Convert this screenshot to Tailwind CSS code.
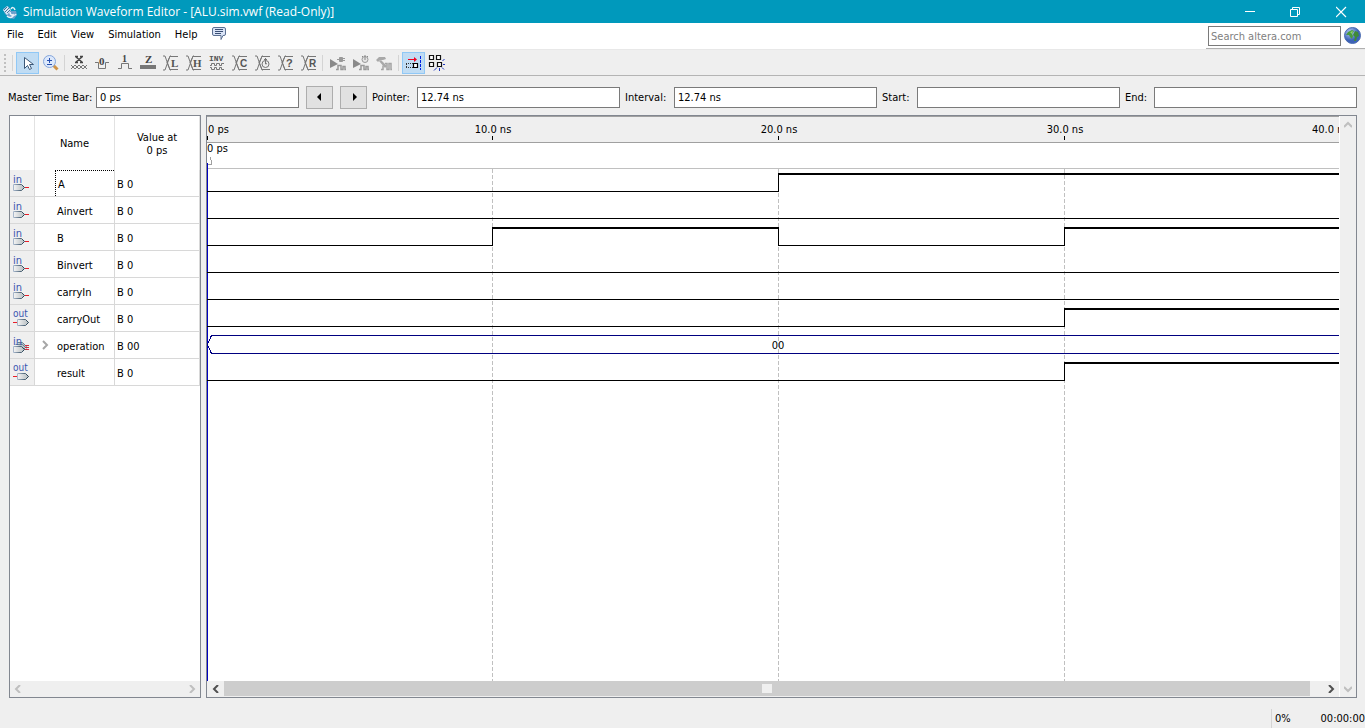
<!DOCTYPE html>
<html lang="en">
<head>
<meta charset="utf-8">
<title>Simulation Waveform Editor</title>
<script src="https://cdn.jsdelivr.net/npm/@tailwindcss/browser@4"></script>
</head>
<body class="flex h-screen flex-col overflow-hidden bg-[#efefef] font-['DejaVu_Sans_Condensed','DejaVu_Sans',sans-serif] text-[11px] leading-[13px] text-black">

<svg class="absolute h-0 w-0" aria-hidden="true">
  <defs>
    <linearGradient id="gate" x1="0" x2="1"><stop offset="0" stop-color="#f4f4f4"/><stop offset="1" stop-color="#b4bcc0"/></linearGradient>
    <linearGradient id="edge" x1="0" x2="1"><stop offset="0" stop-color="#a9b8cc"/><stop offset="1" stop-color="#1f3a4c"/></linearGradient>
    <radialGradient id="sea" cx=".35" cy=".3"><stop offset="0" stop-color="#b9cdf5"/><stop offset="1" stop-color="#3c62b8"/></radialGradient>
    <symbol id="pin-in" viewBox="0 0 18 18">
      <text x="0" y="9" font-size="11" fill="#3a55b0">in</text>
      <path d="M.5 10.500h8l3 3-3 3h-8z" fill="url(#gate)" stroke="url(#edge)"/>
      <path d="M12 13.500h4" stroke="#e8202a"/>
    </symbol>
    <symbol id="pin-out" viewBox="0 0 18 18">
      <text x="0" y="8" font-size="10" fill="#3a55b0">out</text>
      <path d="M0 13.500h4" stroke="#e8202a"/>
      <path d="M4.500 10.500h8l3 3-3 3h-8z" fill="url(#gate)" stroke="url(#edge)"/>
    </symbol>
    <symbol id="pin-bus" viewBox="0 0 18 18">
      <path d="M4.500 6.500h5l4 4-3 3M2.500 8.500h7l4 4" fill="#b8c2c8" stroke="#6c8294"/>
      <text x="0" y="9" font-size="11" fill="#3a55b0">in</text>
      <path d="M.5 10.500h8l3 3-3 3h-8z" fill="url(#gate)" stroke="url(#edge)"/>
      <path d="M12 9.500h4M12 11.500h4M12 13.500h4" stroke="#d03040"/>
    </symbol>
    <symbol id="cross" viewBox="0 0 16 16"><path d="M0 1h2l5 14h1M0 15h2l5-14h1M7 1.500h8M7 14.500h8M7 1.500l-3 6 3 7" fill="none" stroke="#777"/></symbol>
  </defs>
</svg>

<header class="flex h-[23px] shrink-0 items-center bg-[#0099bc] pl-[2px] text-white">
  <svg class="h-4 w-4 shrink-0" viewBox="0 0 16 16">
    <path d="M1 5l5-3 3 5 5 0 1 4-3 4-4-1-5-4z" fill="#6ba0cc"/>
    <path d="M1 6l4-4 4 4-4 5z" fill="#d5e8f5"/><path d="M3 8l4-4M2 6l3-3M5 9l3-3" stroke="#48759c"/>
    <path d="M9 5c1-2 3-2 4 1M5 12c3 3 7 1 6-2M8 8c0 4 5 4 6 2" fill="none" stroke="#e8f1f8" stroke-width="1.500"/>
  </svg>
  <h1 class="ml-[5px] flex-1 whitespace-nowrap font-['Open_Sans','Noto_Sans',sans-serif] text-[12px] leading-4">Simulation Waveform Editor - [ALU.sim.vwf (Read-Only)]</h1>
  <button aria-label="Minimize" class="flex h-full w-[46px] items-center justify-center"><svg class="h-3 w-3" viewBox="0 0 12 12"><path d="M1 5.500h10" stroke="#fff"/></svg></button>
  <button aria-label="Restore" class="flex h-full w-[46px] items-center justify-center"><svg class="h-3 w-3" viewBox="0 0 12 12" fill="none" stroke="#fff"><path d="M.5 3.500h7v7h-7zM2.500 3V1.500h7v7H8"/></svg></button>
  <button aria-label="Close" class="flex h-full w-[46px] items-center justify-center"><svg class="h-3 w-3" viewBox="0 0 12 12"><path d="M0 1l10 10M10 1L0 11" stroke="#fff" stroke-width="1.200"/></svg></button>
</header>

<div class="flex h-[27px] shrink-0 items-start border-b border-[#e8e8e8] bg-white">
  <nav class="flex h-[22px] flex-1 items-center gap-[14px] pl-[7px]">
    <button>File</button><button>Edit</button><button>View</button><button>Simulation</button><button>Help</button>
    <button aria-label="Feedback"><svg class="h-4 w-4" viewBox="0 0 16 16"><path d="M3 1.500h10q1.500 0 1.500 1.500v5q0 1.500-1.500 1.500h-1l-2 4v-4H3Q1.500 9.500 1.500 8V3q0-1.500 1.500-1.500z" fill="#d9e3f6" stroke="#5c7092"/><path d="M4 3.500h8M4 5.500h8M4 7.500h6" stroke="#3a4e74"/></svg></button>
  </nav>
  <div class="flex h-[26px] w-[159px] items-center gap-[3px] border-b border-[#b0b0b0] pl-[2px]">
    <input type="text" aria-label="Search altera.com" placeholder="Search altera.com" class="h-5 w-[133px] border border-[#7a7a7a] bg-white px-[2px] pt-[2px] placeholder:text-[#808080]">
    <button aria-label="Web search"><svg class="h-[17px] w-[17px]" viewBox="0 0 17 17"><circle cx="8.500" cy="8.500" r="8" fill="url(#sea)" stroke="#4c6cb0"/><path d="M2 8l2-3 4-2 2 1-2 3 1 2-1 3-2-2-1-2z" fill="#4a9a3c"/><path d="M11 4l3 1 1 4-2 1-1 4-2 0 1-4-2-2z" fill="#3f8a38"/><path d="M6 5l3-1-1 3z" fill="#8fd06a"/></svg></button>
  </div>
</div>

<div role="toolbar" class="flex h-[26px] shrink-0 items-center border-b border-[#b4b4b4] [&_svg]:overflow-visible">
  <svg class="ml-[4px] h-5 w-[7px] shrink-0" viewBox="0 0 7 20"><path d="M1 1v19" stroke="#c0c0c0" stroke-width="2" stroke-dasharray="2 2"/></svg>
  <div class="mr-[3px] ml-px h-4 w-px bg-[#d4d4d4]"></div>
  <button aria-label="Selection tool" class="flex h-[22px] w-[23px] items-center justify-center border border-[#90c8f6] bg-[#c0dcf3]"><svg class="h-4 w-4" viewBox="0 0 16 16"><path d="M4.500 2.500v11l3-3 2 4 2-1-2-4h4z" fill="#fff" stroke="#3c5878"/></svg></button>
  <button aria-label="Zoom tool" class="flex h-[22px] w-[23px] items-center justify-center"><svg class="h-4 w-4" viewBox="0 0 16 16"><path d="M10.500 10.500l4 4" stroke="#d09448" stroke-width="3"/><circle cx="6.500" cy="6.500" r="6" fill="#dce8fb" stroke="#84a6dc"/><path d="M6.500 3v5M4 5.500h5M4 9.500h5" stroke="#2850b0"/></svg></button>
  <div class="mx-[2px] h-4 w-px bg-[#d4d4d4]"></div>
  <button aria-label="Forcing unknown" class="flex h-[22px] w-[23px] items-center justify-center"><svg class="h-4 w-4" viewBox="0 0 16 16"><path d="M4 1.500h3M9 1.500h3M4 7.500h3M9 7.500h3M5 2l6 5M11 2L5 7" stroke="#444" stroke-width="1.400"/><path d="M0 10l4 4 4-4 4 4 4-4M0 14l4-4 4 4 4-4 4 4" fill="none" stroke="#777"/></svg></button>
  <button aria-label="Forcing low" class="flex h-[22px] w-[23px] items-center justify-center"><svg class="h-4 w-4" viewBox="0 0 16 16"><path d="M1 7.500h3.500v6h7v-6H15" fill="none" stroke="#777"/><text x="5" y="10" font-size="11" font-weight="bold" fill="#444" font-family="Liberation Serif">0</text></svg></button>
  <button aria-label="Forcing high" class="flex h-[22px] w-[23px] items-center justify-center"><svg class="h-4 w-4" viewBox="0 0 16 16"><path d="M1 13.500h3.500v-5h7v5H15" fill="none" stroke="#777"/><text x="5" y="7" font-size="10" font-weight="bold" fill="#444" font-family="Liberation Serif">1</text></svg></button>
  <button aria-label="High impedance" class="flex h-[22px] w-[23px] items-center justify-center"><svg class="h-4 w-4" viewBox="0 0 16 16"><path d="M0 10h16v4H0z" fill="#777"/><text x="5" y="8" font-size="11" font-weight="bold" fill="#444" font-family="Liberation Serif">Z</text></svg></button>
  <button aria-label="Weak low" class="flex h-[22px] w-[23px] items-center justify-center"><svg class="h-4 w-4" viewBox="0 0 16 16"><use href="#cross"/><text x="8" y="12" font-size="11" font-weight="bold" fill="#555" font-family="Liberation Serif">L</text></svg></button>
  <button aria-label="Weak high" class="flex h-[22px] w-[23px] items-center justify-center"><svg class="h-4 w-4" viewBox="0 0 16 16"><use href="#cross"/><text x="7" y="12" font-size="11" font-weight="bold" fill="#555" font-family="Liberation Serif">H</text></svg></button>
  <button aria-label="Invert" class="flex h-[22px] w-[23px] items-center justify-center"><svg class="h-4 w-4" viewBox="0 0 16 16"><text x="0" y="6" font-size="8" font-weight="bold" fill="#555" font-family="Liberation Mono">INV</text><path d="M1 10.500h1.500v-2h3v2h2v-2h3v2h2v-2H15M1 12.500h1.500v2h3v-2h2v2h3v-2h2v2H15" fill="none" stroke="#777"/></svg></button>
  <button aria-label="Count value" class="flex h-[22px] w-[23px] items-center justify-center"><svg class="h-4 w-4" viewBox="0 0 16 16"><use href="#cross"/><text x="8" y="12" font-size="10" font-weight="bold" fill="#555" font-family="Liberation Sans">C</text></svg></button>
  <button aria-label="Overwrite clock" class="flex h-[22px] w-[23px] items-center justify-center"><svg class="h-4 w-4" viewBox="0 0 16 16"><use href="#cross"/><circle cx="10.500" cy="9" r="3.500" fill="#efefef" stroke="#777"/><path d="M10.500 6v3h1M9 4.500h3M10.500 3v3" stroke="#777"/></svg></button>
  <button aria-label="Arbitrary value" class="flex h-[22px] w-[23px] items-center justify-center"><svg class="h-4 w-4" viewBox="0 0 16 16"><use href="#cross"/><text x="8" y="12" font-size="11" font-weight="bold" fill="#555" font-family="Liberation Sans">?</text></svg></button>
  <button aria-label="Random values" class="flex h-[22px] w-[23px] items-center justify-center"><svg class="h-4 w-4" viewBox="0 0 16 16"><use href="#cross"/><text x="8" y="12" font-size="10" font-weight="bold" fill="#555" font-family="Liberation Sans">R</text></svg></button>
  <div class="mr-[3px] ml-[2px] h-4 w-px bg-[#d4d4d4]"></div>
  <button aria-label="Run functional simulation" class="flex h-[22px] w-[23px] items-center justify-center"><svg class="h-4 w-4" viewBox="0 0 16 16"><path d="M0 4l8 5-8 4z" fill="#8a8a8a"/><path d="M7 4.500h2M9.500 2.500h3v4h-3zM12 3.500h3M12 5.500h3" fill="#999" stroke="#999"/><path d="M6 14.500h2v-4h3v4h2v-3h2v3h1" fill="none" stroke="#999" stroke-width="1.500"/></svg></button>
  <button aria-label="Run timing simulation" class="flex h-[22px] w-[23px] items-center justify-center"><svg class="h-4 w-4" viewBox="0 0 16 16"><path d="M0 4l8 5-8 4z" fill="#8a8a8a"/><circle cx="12" cy="4.500" r="3" fill="#e4e4e4" stroke="#999"/><path d="M12 0v5M9 1l1 1M15 1l-1 1" stroke="#888"/><path d="M6 14.500h2v-4h3v4h2v-3h2v3h1" fill="none" stroke="#999" stroke-width="1.500"/></svg></button>
  <button aria-label="Generate testbench" class="flex h-[22px] w-[23px] items-center justify-center"><svg class="h-4 w-4" viewBox="0 0 16 16"><path d="M0 5l3-3h6l1 2-3 1h-3l-2 2zM5 5l6 6-2 2-6-7z" fill="#a8a8a8"/><path d="M5 14.500h2v-4M9 8.500h2v6h2v-6h2v6h1" fill="none" stroke="#a4a4a4" stroke-width="1.500"/></svg></button>
  <div class="mx-[3px] h-4 w-px bg-[#d4d4d4]"></div>
  <button aria-label="Snap to transition" class="flex h-[22px] w-[23px] items-center justify-center border border-[#90c8f6] bg-[#c0dcf3]"><svg class="h-4 w-4" viewBox="0 0 16 16"><path d="M2 4.500h7" stroke="#f00020"/><path d="M8 2l3 2.500L8 7z" fill="#f00020"/><path d="M0 8.500h8M0 12.500h8M.5 9v3" stroke="#333" stroke-dasharray="1 1"/><path d="M7.500 8.500h4v4h-4z" fill="#fff" stroke="#000" stroke-width="1.200"/><path d="M14.500 1v14" stroke="#0020e0" stroke-dasharray="3 1"/></svg></button>
  <button aria-label="Snap to grid" class="flex h-[22px] w-[23px] items-center justify-center"><svg class="h-4 w-4" viewBox="0 0 16 16" fill="#fff"><path d="M.5.5h4v4h-4zM7.500.5h4v4h-4zM.5 7.500h4v4h-4zM8.500 7.500h4v4h-4z" stroke="#111" stroke-width="1.200"/><path d="M14 9.500h2M13 12.500l2 2M10.500 13v3M8 12.500l-3 3M13.500 6l2-2" stroke="#2038c0"/></svg></button>
</div>

<form class="flex h-[39px] shrink-0 items-center px-2 pt-[3px]">
  <label for="master" class="w-[88px] shrink-0 whitespace-nowrap">Master Time Bar:</label>
  <input id="master" value="0 ps" class="h-[21px] min-w-0 flex-1 border border-[#7a7a7a] bg-white px-[3px] pt-px">
  <button type="button" aria-label="Previous transition" class="ml-[7px] flex h-[23px] w-[27px] shrink-0 items-center justify-center border border-[#adadad] bg-[#e1e1e1]"><svg class="h-2 w-2" viewBox="0 0 8 8"><path d="M5 0v8L1 4z"/></svg></button>
  <button type="button" aria-label="Next transition" class="mr-[5px] ml-[7px] flex h-[23px] w-[27px] shrink-0 items-center justify-center border border-[#adadad] bg-[#e1e1e1]"><svg class="h-2 w-2" viewBox="0 0 8 8"><path d="M3 0v8l4-4z"/></svg></button>
  <label for="pointer" class="w-[45px] shrink-0">Pointer:</label>
  <input id="pointer" value="12.74 ns" class="h-[21px] min-w-0 flex-1 border border-[#7a7a7a] bg-white px-[3px] pt-px">
  <label for="interval" class="ml-[5px] w-[49px] shrink-0">Interval:</label>
  <input id="interval" value="12.74 ns" class="h-[21px] min-w-0 flex-1 border border-[#7a7a7a] bg-white px-[3px] pt-px">
  <label for="start" class="ml-[5px] w-[35px] shrink-0">Start:</label>
  <input id="start" class="h-[21px] min-w-0 flex-1 border border-[#7a7a7a] bg-white px-[3px]">
  <label for="end" class="ml-[5px] w-[29px] shrink-0">End:</label>
  <input id="end" class="h-[21px] min-w-0 flex-1 border border-[#7a7a7a] bg-white px-[3px]">
</form>

<main class="flex min-h-0 flex-1 gap-[5px] pr-2 pl-[9px]">
  <section class="flex w-[192px] shrink-0 flex-col border border-[#828790] bg-white">
    <div class="flex-1">
      <table class="w-full table-fixed border-separate border-spacing-0">
        <colgroup><col class="w-[25px]"><col class="w-[80px]"><col></colgroup>
        <thead>
          <tr class="h-[54px] [&>th]:border-r [&>th]:border-[#e2e2e2] [&>th]:p-0 [&>th]:pt-px [&>th]:font-normal"><th></th><th>Name</th><th>Value at<br>0 ps</th></tr>
        </thead>
        <tbody class="[&_td]:h-[27px] [&_td]:border-r [&_td]:border-b [&_td]:border-[#d8d8d8] [&_td]:p-0 [&_svg]:h-[18px] [&_svg]:w-[18px]">
          <tr><td class="bg-[#efefef] pl-[3px]!"><svg><use href="#pin-in"/></svg></td><td><div class="ml-5 flex h-[26px] items-center border-t border-l border-dotted border-black pt-px pl-[2px]">A</div></td><td class="pt-[2px]! pl-[2px]!">B 0</td></tr>
          <tr><td class="bg-[#efefef] pl-[3px]!"><svg><use href="#pin-in"/></svg></td><td class="pt-[2px]! pl-[22px]!">Ainvert</td><td class="pt-[2px]! pl-[2px]!">B 0</td></tr>
          <tr><td class="bg-[#efefef] pl-[3px]!"><svg><use href="#pin-in"/></svg></td><td class="pt-[2px]! pl-[22px]!">B</td><td class="pt-[2px]! pl-[2px]!">B 0</td></tr>
          <tr><td class="bg-[#efefef] pl-[3px]!"><svg><use href="#pin-in"/></svg></td><td class="pt-[2px]! pl-[22px]!">Binvert</td><td class="pt-[2px]! pl-[2px]!">B 0</td></tr>
          <tr><td class="bg-[#efefef] pl-[3px]!"><svg><use href="#pin-in"/></svg></td><td class="pt-[2px]! pl-[22px]!">carryIn</td><td class="pt-[2px]! pl-[2px]!">B 0</td></tr>
          <tr><td class="bg-[#efefef] pl-[3px]!"><svg><use href="#pin-out"/></svg></td><td class="pt-[2px]! pl-[22px]!">carryOut</td><td class="pt-[2px]! pl-[2px]!">B 0</td></tr>
          <tr><td class="bg-[#efefef] pl-[3px]!"><svg><use href="#pin-bus"/></svg></td><td class="pt-[2px]!"><div class="flex items-center"><button aria-label="Expand operation" class="flex w-[22px] items-center pl-[1px]"><svg viewBox="0 0 18 18"><path d="M7 4l4 4-4 4" fill="none" stroke="#a6a6a6" stroke-width="2"/></svg></button>operation</div></td><td class="pt-[2px]! pl-[2px]!">B 00</td></tr>
          <tr><td class="bg-[#efefef] pl-[3px]!"><svg><use href="#pin-out"/></svg></td><td class="pt-[2px]! pl-[22px]!">result</td><td class="pt-[2px]! pl-[2px]!">B 0</td></tr>
        </tbody>
      </table>
    </div>
    <div class="flex h-4 items-center justify-between bg-[#efefef] px-1">
      <button aria-label="Scroll left"><svg class="h-2 w-2" viewBox="0 0 8 8"><path d="M6 0L2 4l4 4" fill="none" stroke="#bfbfbf" stroke-width="2"/></svg></button>
      <button aria-label="Scroll right"><svg class="h-2 w-2" viewBox="0 0 8 8"><path d="M2 0l4 4-4 4" fill="none" stroke="#bfbfbf" stroke-width="2"/></svg></button>
    </div>
  </section>

  <section class="flex min-w-0 flex-1 border border-[#828790] bg-white">
    <div class="flex min-w-0 flex-1 flex-col">
      <!-- one major division (10 ns) is 286 units wide; signal rows are 27 units apart -->
      <svg class="min-h-0 w-full flex-1 overflow-hidden" fill="none" stroke="#000" shape-rendering="crispEdges">
        <rect width="4000" height="26" fill="#efefef" stroke="none"/>
        <path d="M0 .5h4000M0 26.500h4000" stroke="#a0a0a0"/>
        <path d="M0 52.500h4000" stroke="#c0c0c0"/>
        <path d="M.5 20v4M285.500 20v4M571.500 20v4M857.500 20v4"/>
        <path d="M285.500 53v2000M571.500 53v2000M857.500 53v2000" stroke="#c0c0c0" stroke-dasharray="4 2"/>
        <path d="M1 48.500h4M4.500 48v-4M3.500 44v-3" stroke="#a0a0a0"/>
        <path d="M.5 47v2000" stroke="#0000c0"/>
        <path d="M0 75.500h571.500v-18M0 102.500h4000M0 129.500h285.500v-18M571.500 111v18.500h286v-18M0 156.500h4000M0 183.500h4000M0 210.500h857.500v-18M0 264.500h857.500v-18"/>
        <path d="M571 58h4000M285 112h287M857 112h4000M857 193h4000M857 247h4000" stroke-width="2"/>
        <path d="M4000 219.500H4.500l-4 9 4 9H4000" stroke="#000080"/>
        <g fill="#000" stroke="none">
          <text x="1" y="17">0 ps</text><text x="0" y="36">0 ps</text>
          <text x="286" y="17" text-anchor="middle">10.0 ns</text>
          <text x="572" y="17" text-anchor="middle">20.0 ns</text>
          <text x="858" y="17" text-anchor="middle">30.0 ns</text>
          <text x="1105" y="17">40.0 ns</text>
          <text x="571" y="233" text-anchor="middle">00</text>
        </g>
      </svg>
      <div class="flex h-4 shrink-0 bg-[#efefef]">
        <button aria-label="Scroll left" class="flex w-[17px] items-center justify-center"><svg class="h-2 w-2" viewBox="0 0 8 8"><path d="M6 0L2 4l4 4" fill="none" stroke="#505050" stroke-width="2"/></svg></button>
        <div class="flex h-[15px] flex-1 items-center justify-center bg-[#cdcdcd]"><div class="h-[9px] w-[10px] bg-[#efefef]"></div></div>
        <button aria-label="Scroll right" class="flex w-[29px] items-center justify-end pr-1"><svg class="h-2 w-2" viewBox="0 0 8 8"><path d="M2 0l4 4-4 4" fill="none" stroke="#505050" stroke-width="2"/></svg></button>
      </div>
    </div>
    <div class="flex w-[17px] shrink-0 flex-col items-center justify-between border-l border-white bg-[#efefef] py-1">
      <button aria-label="Scroll up"><svg class="h-2 w-2" viewBox="0 0 8 8"><path d="M0 7l4-4 4 4" fill="none" stroke="#bfbfbf" stroke-width="2"/></svg></button>
      <button aria-label="Scroll down"><svg class="h-2 w-2" viewBox="0 0 8 8"><path d="M0 2l4 4 4-4" fill="none" stroke="#bfbfbf" stroke-width="2"/></svg></button>
    </div>
  </section>
</main>

<footer class="flex h-[30px] shrink-0 items-end justify-end">
  <div class="flex h-[19px] w-[94px] items-center justify-between border-l border-[#d4d4d4] pl-[3px]"><span>0%</span><span>00:00:00</span></div>
</footer>
</body>
</html>
